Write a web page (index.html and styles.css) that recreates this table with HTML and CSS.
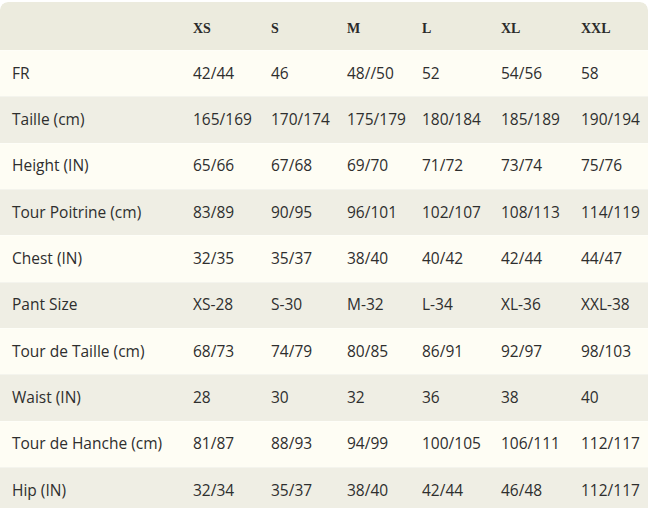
FILE: index.html
```html
<!DOCTYPE html>
<html lang="fr">
<head>
<meta charset="utf-8">
<link rel="stylesheet" href="styles.css">
</head>
<body>
<table class="sizes">
  <thead>
    <tr class="head"><th></th><th>XS</th><th>S</th><th>M</th><th>L</th><th>XL</th><th>XXL</th></tr>
  </thead>
  <tbody>
    <tr><td>FR</td><td>42/44</td><td>46</td><td>48//50</td><td>52</td><td>54/56</td><td>58</td></tr>
    <tr><td>Taille (cm)</td><td>165/169</td><td>170/174</td><td>175/179</td><td>180/184</td><td>185/189</td><td>190/194</td></tr>
    <tr><td>Height (IN)</td><td>65/66</td><td>67/68</td><td>69/70</td><td>71/72</td><td>73/74</td><td>75/76</td></tr>
    <tr><td>Tour Poitrine (cm)</td><td>83/89</td><td>90/95</td><td>96/101</td><td>102/107</td><td>108/113</td><td>114/119</td></tr>
    <tr><td>Chest (IN)</td><td>32/35</td><td>35/37</td><td>38/40</td><td>40/42</td><td>42/44</td><td>44/47</td></tr>
    <tr><td>Pant Size</td><td>XS-28</td><td>S-30</td><td>M-32</td><td>L-34</td><td>XL-36</td><td>XXL-38</td></tr>
    <tr><td>Tour de Taille (cm)</td><td>68/73</td><td>74/79</td><td>80/85</td><td>86/91</td><td>92/97</td><td>98/103</td></tr>
    <tr><td>Waist (IN)</td><td>28</td><td>30</td><td>32</td><td>36</td><td>38</td><td>40</td></tr>
    <tr><td>Tour de Hanche (cm)</td><td>81/87</td><td>88/93</td><td>94/99</td><td>100/105</td><td>106/111</td><td>112/117</td></tr>
    <tr><td>Hip (IN)</td><td>32/34</td><td>35/37</td><td>38/40</td><td>42/44</td><td>46/48</td><td>112/117</td></tr>
  </tbody>
</table>
</body>
</html>
```
FILE: styles.css
```css
html, body {
  margin: 0;
  padding: 0;
  background: #ffffff;
}
body {
  padding-top: 2px;
}
.sizes {
  width: 648px;
  border-collapse: separate;
  border-spacing: 0;
  table-layout: fixed;
  font-family: "Open Sans", "Noto Sans", sans-serif;
  font-weight: 400;
  font-size: 15.5px;
  color: #2e2e2e;
  border-radius: 8px 8px 0 0;
  overflow: hidden;
}
.sizes th:nth-child(1), .sizes td:nth-child(1) { width: 181px; }
.sizes th:nth-child(2), .sizes td:nth-child(2) { width: 78px; }
.sizes th:nth-child(3), .sizes td:nth-child(3) { width: 76px; }
.sizes th:nth-child(4), .sizes td:nth-child(4) { width: 75px; }
.sizes th:nth-child(5), .sizes td:nth-child(5) { width: 79px; }
.sizes th:nth-child(6), .sizes td:nth-child(6) { width: 80px; }
.sizes th, .sizes td {
  text-align: left;
  padding: 0 0 0 12px;
  white-space: nowrap;
}
.head th {
  height: 48px;
  background: #ecebde;
  font-family: "Liberation Serif", "Times New Roman", serif;
  font-weight: bold;
  font-size: 14px;
  color: #2a2a2a;
  padding-top: 5px;
  box-sizing: border-box;
}
.head th:first-child { border-top-left-radius: 8px; }
.head th:last-child { border-top-right-radius: 8px; }
.sizes tbody td {
  height: 46.33px;
  box-sizing: border-box;
  padding-bottom: 2px;
  border-top: 1px solid rgba(255, 255, 255, 0.35);
}
.sizes tbody tr:nth-child(odd) td { background: #fefdf4; }
.sizes tbody tr:nth-child(even) td { background: #efeee4; }
```
